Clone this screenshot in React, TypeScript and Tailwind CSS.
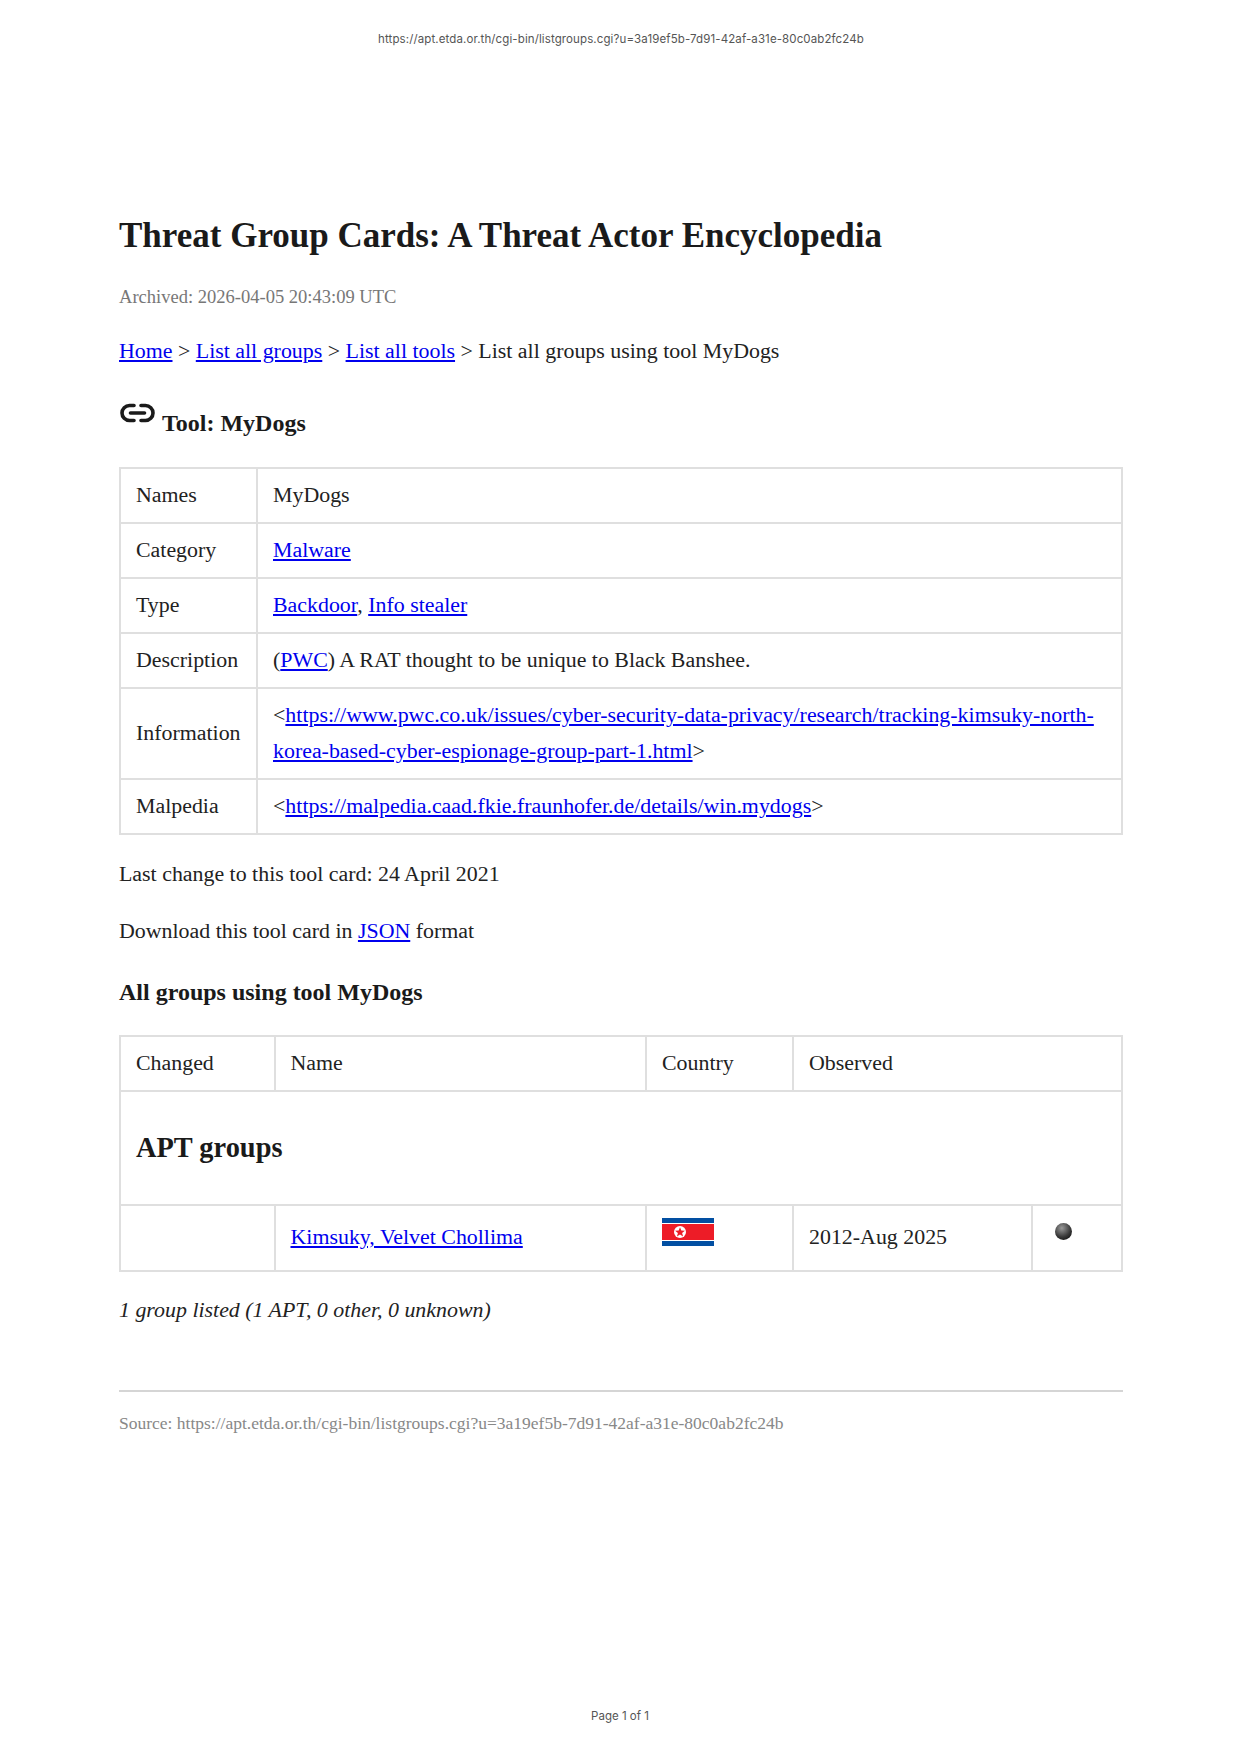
const serif = "font-['Liberation_Serif',serif]";

function A({ children }: { children: React.ReactNode }) {
  return <a href="#" className="text-[#0000ee] underline">{children}</a>;
}

function Td({ children, className = "" }: { children?: React.ReactNode; className?: string }) {
  return <td className={`border-2 border-[#dfdfdf] px-[15px] pt-[7.5px] pb-[9.5px] align-middle ${className}`}>{children}</td>;
}

function LinkIcon() {
  return (
    <svg width="35" height="20" viewBox="0 0 35 20" fill="none" stroke="#1a1a1a" strokeWidth="3.6" strokeLinecap="round">
      <path d="M14 2.5H9.5a7.5 7.5 0 0 0 0 15H14" />
      <path d="M21 2.5h4.500a7.500 7.500 0 0 1 0 15H21" />
      <path d="M10.500 10h14" />
    </svg>
  );
}

function Flag() {
  return (
    <svg width="52" height="28" viewBox="0 0 52 28" className="block">
      <rect width="52" height="28" fill="#024fa2" />
      <rect y="5" width="52" height="18" fill="#fff" />
      <rect y="6" width="52" height="16" fill="#ed1c27" />
      <circle cx="18" cy="14" r="6" fill="#fff" />
      <path d="M18 9.200l1.300 3.400 3.600.1-2.800 2.200 1 3.500-3.100-2-3.100 2 1-3.500-2.800-2.200 3.600-.1z" fill="#ed1c27" />
    </svg>
  );
}

export default function App() {
  return (
    <div className={`relative flex h-[1756px] w-[1242px] flex-col bg-white text-[21.9px] leading-[36px] text-[#222] ${serif}`}>
      <div className="pt-[31px] text-center font-['Inter',sans-serif] text-[11.5px] leading-[16px] tracking-[0.11px] text-[#555]">
        https://apt.etda.or.th/cgi-bin/listgroups.cgi?u=3a19ef5b-7d91-42af-a31e-80c0ab2fc24b
      </div>

      <div className="flex flex-1 flex-col px-[119px] pt-[168px]">
        <h1 className="text-[35px] leading-[42px] font-bold text-[#1a1a1a]">Threat Group Cards: A Threat Actor Encyclopedia</h1>
        <p className="mt-[26px] text-[18.55px] leading-[28px] text-[#777]">Archived: 2026-04-05 20:43:09 UTC</p>
        <p className="mt-[22px]">
          <A>Home</A> &gt; <A>List all groups</A> &gt; <A>List all tools</A> &gt; List all groups using tool MyDogs
        </p>
        <h2 className="mt-[29px] flex items-start text-[24px] leading-[36px] font-bold text-[#1a1a1a]">
          <span className="mt-[5px] ml-px"><LinkIcon /></span>
          <span className="mt-[7px] ml-[7px]">Tool: MyDogs</span>
        </h2>

        <table className="mt-[26px] w-full table-fixed border-collapse">
          <colgroup>
            <col className="w-[137px]" />
            <col />
          </colgroup>
          <tbody>
            <tr><Td>Names</Td><Td>MyDogs</Td></tr>
            <tr><Td>Category</Td><Td><A>Malware</A></Td></tr>
            <tr><Td>Type</Td><Td><A>Backdoor</A>, <A>Info stealer</A></Td></tr>
            <tr><Td>Description</Td><Td>(<A>PWC</A>) A RAT thought to be unique to Black Banshee.</Td></tr>
            <tr>
              <Td>Information</Td>
              <Td>&lt;<A>https://www.pwc.co.uk/issues/cyber-security-data-privacy/research/tracking-kimsuky-north-korea-based-cyber-espionage-group-part-1.html</A>&gt;</Td>
            </tr>
            <tr><Td>Malpedia</Td><Td>&lt;<A>https://malpedia.caad.fkie.fraunhofer.de/details/win.mydogs</A>&gt;</Td></tr>
          </tbody>
        </table>

        <p className="mt-[21px]">Last change to this tool card: 24 April 2021</p>
        <p className="mt-[21px]">Download this tool card in <A>JSON</A> format</p>
        <h3 className="mt-[25px] text-[24px] leading-[36px] font-bold text-[#1a1a1a]">All groups using tool MyDogs</h3>

        <table className="mt-[25px] w-full table-fixed border-collapse">
          <colgroup>
            <col className="w-[154.5px]" />
            <col className="w-[371.5px]" />
            <col className="w-[147px]" />
            <col className="w-[239px]" />
            <col />
          </colgroup>
          <tbody>
            <tr>
              <Td>Changed</Td>
              <Td>Name</Td>
              <Td>Country</Td>
              <Td className="border-r-0">Observed</Td>
              <Td className="border-l-0" />
            </tr>
            <tr>
              <td colSpan={5} className="border-2 border-[#dfdfdf] px-[15px] py-[30px] text-[28.4px] leading-[52px] font-bold text-[#1a1a1a]">APT groups</td>
            </tr>
            <tr className="h-[66px]">
              <Td />
              <Td><A>Kimsuky, Velvet Chollima</A></Td>
              <td className="border-2 border-[#dfdfdf] px-[15px] pt-[12px] align-top"><Flag /></td>
              <Td>2012-Aug 2025</Td>
              <td className="border-2 border-[#dfdfdf] px-[15px] pt-[17px] align-top">
                <div className="ml-[7px] h-[17px] w-[17px] rounded-full bg-[radial-gradient(circle_at_40%_30%,#999,#3a3a3a_55%,#000)]" />
              </td>
            </tr>
          </tbody>
        </table>

        <p className="mt-[20px] italic">1 group listed (1 APT, 0 other, 0 unknown)</p>

        <div className="mt-[62px] border-t-2 border-[#d5d5d5] pt-[17px] text-[17.5px] leading-[28px] text-[#888]">
          Source: https://apt.etda.or.th/cgi-bin/listgroups.cgi?u=3a19ef5b-7d91-42af-a31e-80c0ab2fc24b
        </div>
      </div>

      <div className="pr-[2px] pb-[32px] text-center font-['Inter',sans-serif] text-[11.5px] leading-[16px] text-[#555]">Page 1 of 1</div>
    </div>
  );
}
